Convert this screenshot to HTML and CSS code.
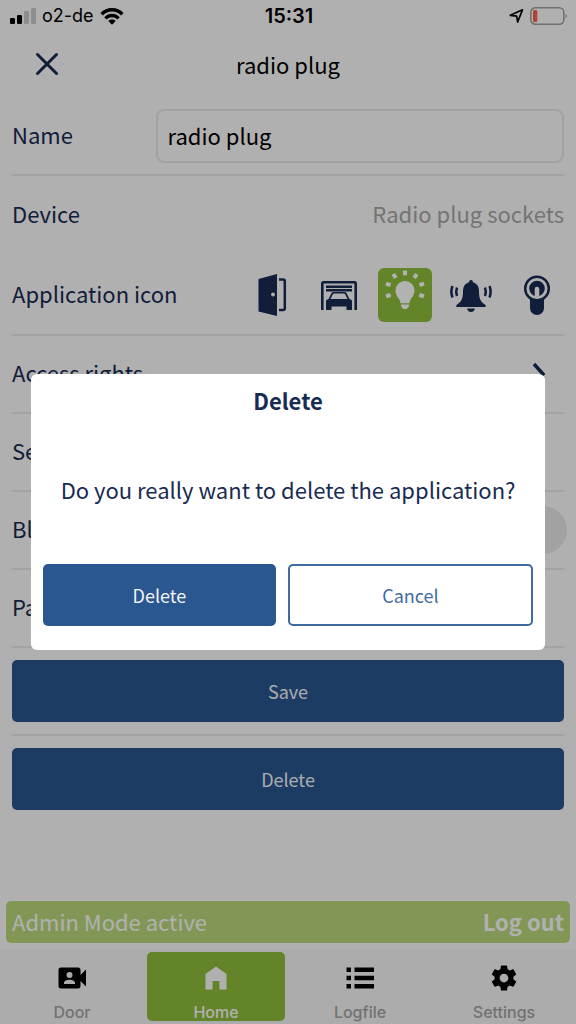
FILE: index.html
```html
<!DOCTYPE html>
<html lang="en">
<head>
<meta charset="utf-8">
<meta name="viewport" content="width=device-width, initial-scale=1">
<title>radio plug</title>
<link rel="stylesheet" href="styles.css">
</head>
<body>
<div class="screen">
  <div class="status">
    <div class="carrier">
      <svg width="26" height="16" viewBox="0 0 26 16" aria-hidden="true">
        <rect x="0" y="10" width="5" height="6" rx="1.3"/>
        <rect x="7" y="7" width="5" height="9" rx="1.3"/>
        <g fill="#ccc"><rect x="14" y="3" width="5" height="13" rx="1.3"/><rect x="21" y="0" width="5" height="16" rx="1.3"/></g>
      </svg>
      <span>o2-de</span>
      <svg width="24" height="17" viewBox="0 0 24 17" aria-hidden="true">
        <g fill="none" stroke="#000" stroke-width="3.400"><path d="M1.6 6.2C7.4.2 16.600.2 22.400 6.200"/><path d="M5.400 10.400C9.200 6.600 14.800 6.600 18.600 10.400"/></g>
        <path d="M8.300 12.900C10.400 11 13.600 11 15.700 12.900L12 16.800Z"/>
      </svg>
    </div>
    <time class="clock">15:31</time>
    <div class="power">
      <svg width="15" height="16" viewBox="0 0 15 16" aria-hidden="true"><path d="M1.300 7.300 13.500 1.800 8.700 14 7.700 8.100Z" fill="none" stroke="#000" stroke-width="1.700" stroke-linejoin="round"/></svg>
      <svg width="38" height="18" viewBox="0 0 38 18" aria-hidden="true"><rect x=".8" y=".8" width="33" height="16.400" rx="4.500" fill="none" stroke="#9f9f9f" stroke-width="1.500"/><rect x="3" y="3" width="4.300" height="12" rx="1.500" fill="#ff5d48"/><path d="M35.500 6.500Q38 9 35.500 11.800Z" fill="#9f9f9f"/></svg>
    </div>
  </div>
  <header class="header">
    <button class="close" type="button" aria-label="Close"><svg width="24" height="24" viewBox="0 0 24 24"><path d="M2.500 2.500 21.500 21.500M21.500 2.500 2.500 21.500" fill="none" stroke="#182b53" stroke-width="3" stroke-linecap="round"/></svg></button>
    <h1 class="title">radio plug</h1>
  </header>
  <main class="form">
    <div class="row"><label class="label" for="name">Name</label><input class="field" id="name" type="text" value="radio plug"></div>
    <div class="row row-tall row-open"><span class="label">Device</span><span class="value">Radio plug sockets</span></div>
    <div class="row row-tall">
      <span class="label">Application icon</span>
      <div class="icons">
        <button class="icon" type="button" aria-label="Door"><svg width="54" height="54" viewBox="0 0 54 54"><path d="M12.500 11 31 6V48L12.500 43.500Z"/><circle cx="27" cy="26.500" r="1.900" fill="#fdfdfd"/><path d="M33 11.500H37Q38.800 11.500 38.800 13V40.500Q38.800 42 37 42H33" fill="none" stroke="#182b53" stroke-width="2.500"/></svg></button>
        <button class="icon" type="button" aria-label="Garage"><svg width="54" height="54" viewBox="0 0 54 54"><path d="M10.300 42V15.500Q10.300 14.300 11.500 14.300H42.500Q43.700 14.300 43.700 15.500V42" fill="none" stroke="#182b53" stroke-width="2.600"/><path d="M14 17.500H40V20H14ZM14 20.900H40V23.500H14Z"/><path fill-rule="evenodd" d="M14 33Q14 31.500 16.500 31L19.500 25Q20 24 22 24H32Q34 24 34.500 25L37.500 31Q40 31.500 40 33V42H34.500V38.500H19.500V42H14ZM18.500 31H35.500L33 26Q32.700 25.500 31.500 25.500H22.500Q21.300 25.500 21 26Z"/></svg></button>
        <button class="icon icon-on" type="button" aria-label="Light" aria-pressed="true"><svg width="54" height="54" viewBox="0 0 54 54"><path d="M22.500 35.300C22.500 30.500 17.500 29 17.500 22.500A9.500 9.500 0 0 1 36.500 22.500C36.500 29 31.500 30.500 31.500 35.300ZM23 36.500H31V38.500L28.500 41H25.500L23 38.500Z"/><g fill="none" stroke="#fff" stroke-width="4"><path d="M27 2.500V7.200M15.300 6 17.800 10M38.700 6 36.200 10M8 15.500 12.500 17.200M46 15.500 41.500 17.200M8 28.300 12.700 27M46 28.300 41.300 27"/></g></svg></button>
        <button class="icon" type="button" aria-label="Bell"><svg width="54" height="54" viewBox="0 0 54 54"><path d="M25 14.200Q25 12 27 12T29 14.200Q35 16 35 23C35 31 36.500 33.500 41.500 37Q42.500 39 40.500 39H13.500Q11.500 39 12.500 37C17.500 33.500 19 31 19 23Q19 16 25 14.200ZM23 40.500H31Q30 44 27 44T23 40.500Z"/><path d="M13 19.500Q11.500 23.500 13 28M8.500 18Q6.300 23.500 8.500 29.500M41 19.500Q42.500 23.500 41 28M45.500 18Q47.700 23.500 45.500 29.500" fill="none" stroke="#182b53" stroke-width="2.500"/></svg></button>
        <button class="icon" type="button" aria-label="Switch"><svg width="54" height="54" viewBox="0 0 54 54"><path d="M20 31H34V40A7 7 0 0 1 20 40Z"/><circle cx="27" cy="20.500" r="11.800" fill="#fdfdfd" stroke="#182b53" stroke-width="2.500"/><circle cx="27" cy="20.500" r="7.800"/><path d="M24.700 28.500V21A2.300 2.300 0 0 1 29.300 21V28.500Z" fill="#fdfdfd"/></svg></button>
      </div>
    </div>
    <div class="row"><a class="link" href="#rights"><span class="label">Access rights</span><svg width="15" height="24" viewBox="0 0 15 24" aria-hidden="true"><path d="M2 2 11 12 2 22" fill="none" stroke="#182b53" stroke-width="3.500"/></svg></a></div>
    <div class="row"><span class="label">Se</span></div>
    <div class="row"><label class="label" for="toggle">Bl</label><input class="toggle" id="toggle" type="checkbox" role="switch" checked></div>
    <div class="row"><span class="label">Pa</span></div>
    <div class="action action-line"><button class="button" type="button">Save</button></div>
    <div class="action"><button class="button" type="button">Delete</button></div>
  </main>
  <div class="admin"><span>Admin Mode active</span><button class="logout" type="button">Log out</button></div>
  <nav class="tabs">
    <a class="tab" href="#door"><svg width="30" height="30" viewBox="0 0 30 30" aria-hidden="true"><path fill-rule="evenodd" d="M4 4.500H21Q23.500 4.500 23.500 7V12L29 6.500V23.500L23.500 18V23Q23.500 25.500 21 25.500H4Q1.500 25.500 1.500 23V7Q1.500 4.500 4 4.500ZM12.500 9A3 3 0 1 0 12.500 15A3 3 0 1 0 12.500 9ZM7 21H18V19.800C18 17.800 15 16.700 12.500 16.700S7 17.800 7 19.800Z"/></svg>Door</a>
    <a class="tab tab-on" href="#home" aria-current="page"><svg width="30" height="30" viewBox="0 0 30 30" aria-hidden="true"><path d="M4.500 11 15 3.500 25.500 11V26.500H18.500V18H11.500V26.500H4.500Z"/></svg>Home</a>
    <a class="tab" href="#log"><svg width="30" height="30" viewBox="0 0 30 30" aria-hidden="true"><path d="M1.500 4.500H6V9H1.500ZM9.500 4.500H29V9H9.500ZM1.500 12.700H6V17.200H1.500ZM9.500 12.700H29V17.200H9.500ZM1.500 21H6V25.500H1.500ZM9.500 21H29V25.500H9.500Z"/></svg>Logfile</a>
    <a class="tab" href="#settings"><svg width="30" height="30" viewBox="0 0 24 24" aria-hidden="true"><path d="M19.430 12.980c.04-.32.070-.64.070-.98s-.03-.66-.07-.98l2.110-1.650c.19-.15.240-.42.120-.64l-2-3.460c-.12-.22-.39-.3-.61-.22l-2.490 1c-.52-.4-1.080-.73-1.690-.98l-.38-2.650C14.460 2.180 14.250 2 14 2h-4c-.25 0-.46.180-.49.420l-.38 2.650c-.61.250-1.170.590-1.690.980l-2.490-1c-.23-.09-.49 0-.61.220l-2 3.460c-.13.220-.07.490.12.640l2.110 1.650c-.04.320-.07.650-.07.980s.03.660.07.980l-2.110 1.650c-.19.150-.24.420-.12.640l2 3.460c.12.220.39.300.61.220l2.490-1c.52.400 1.080.730 1.690.980l.38 2.650c.03.240.24.420.49.420h4c.25 0 .46-.18.490-.42l.38-2.650c.61-.25 1.170-.59 1.690-.98l2.490 1c.23.090.49 0 .61-.22l2-3.460c.12-.22.070-.49-.12-.64l-2.110-1.650zM12 15.500c-1.930 0-3.500-1.570-3.500-3.500s1.570-3.500 3.500-3.500 3.500 1.570 3.500 3.500-1.570 3.500-3.500 3.500z"/></svg>Settings</a>
  </nav>
</div>
<div class="backdrop">
  <section class="dialog" role="dialog" aria-modal="true" aria-labelledby="dialog-title">
    <h2 class="dialog-title" id="dialog-title">Delete</h2>
    <p class="dialog-text">Do you really want to delete the application?</p>
    <div class="dialog-actions">
      <button class="button" type="button">Delete</button>
      <button class="button button-outline" type="button">Cancel</button>
    </div>
  </section>
</div>
</body>
</html>
```

FILE: styles.css
```css
* { box-sizing: border-box; }
body {
  margin: 0;
  background: #fdfdfd;
  color: #182b53;
  font: 22px/32px "Noto Sans CJK SC", "Noto Sans", sans-serif;
}
button, input { font: inherit; color: inherit; }
button { padding: 0; border: 0; background: none; }
a { color: inherit; text-decoration: none; }
svg { display: block; flex: none; }

.screen { display: flex; flex-direction: column; min-height: 100vh; }

.status {
  display: grid;
  grid-template-columns: 1fr auto 1fr;
  align-items: center;
  height: 32px;
  padding: 0 8px 0 10px;
  color: #000;
  font: 18px/24px Inter, sans-serif;
}
.carrier, .power { display: flex; align-items: center; gap: 6px; }
.power { justify-content: flex-end; }
.clock { font-size: 20px; font-weight: 600; }

.header {
  display: grid;
  grid-template-columns: 71px 1fr 71px;
  align-items: center;
  height: 64px;
  margin-bottom: 2px;
}
.close { justify-self: end; width: 48px; height: 48px; display: grid; place-items: center; }
.title { margin: 0; color: #000; font-size: 22px; font-weight: 400; text-align: center; }

.form { flex: 1; padding: 0 12px; }
.row {
  display: flex;
  align-items: center;
  justify-content: space-between;
  height: 78px;
  border-bottom: 2px solid #e8e8e8;
}
.row-tall { height: 80px; }
.row-open { border-bottom-color: transparent; }
.label, .value { padding-bottom: 4px; }
.field {
  width: 74%;
  height: 54px;
  padding: 0 10px 2px;
  border: 2px solid #e8e8e8;
  border-radius: 8px;
  background: #fdfdfd;
  color: #000;
}
.value { color: #a6a6a6; }
.icons { display: flex; gap: 12px; }
.icon { width: 54px; height: 54px; border-radius: 6px; fill: #182b53; }
.icon-on { background: #90be3c; fill: #fff; }
.link { display: flex; flex: 1; align-items: center; justify-content: space-between; padding-right: 17px; }
.toggle {
  appearance: none;
  width: 80px;
  height: 36px;
  margin: 0 -3px 0 0;
  border-radius: 24px;
  background: #f4f4f4;
  display: flex;
  align-items: center;
  justify-content: flex-end;
}
.toggle::before { content: ""; width: 48px; height: 48px; border-radius: 50%; background: #e8e8e8; }

.action { padding: 12px 0; }
.action-line { border-bottom: 2px solid #e8e8e8; }
.button {
  display: block;
  width: 100%;
  height: 62px;
  border-radius: 5px;
  background: #2a578f;
  color: #f3f6fa;
  font-size: 18px;
}
.button-outline { border: 2px solid #3f6ba3; background: #fff; color: #3f6ba3; }

.admin {
  display: flex;
  align-items: center;
  justify-content: space-between;
  height: 42px;
  margin: 0 6px 6px;
  padding: 0 6px 3px;
  border-radius: 5px;
  background: #bbd97b;
  color: #fdfdfd;
}
.logout { font-weight: 700; }

.tabs { display: grid; grid-template-columns: repeat(4, 1fr); height: 75px; padding: 3px 0; background: #f6f6f6; }
.tab {
  display: flex;
  flex-direction: column;
  align-items: center;
  gap: 10px;
  margin: 0 3px;
  padding-top: 11px;
  border-radius: 5px;
  color: #a4a4a4;
  font: 500 16px/18px Inter, sans-serif;
}
.tab svg { fill: #000; }
.tab-on { background: #90be3c; color: #fdfdfd; }
.tab-on svg { fill: #fdfdfd; }

.backdrop {
  position: fixed;
  inset: 0;
  display: flex;
  align-items: center;
  padding: 0 31px;
  background: rgba(0, 0, 0, .3);
}
.dialog { flex: 1; padding: 10px 12px 24px; border-radius: 6px; background: #fff; }
.dialog-title { margin: 0; font-size: 22px; font-weight: 700; text-align: center; }
.dialog-text { margin: 57px 0 59px; text-align: center; }
.dialog-actions { display: grid; grid-template-columns: 19fr 20fr; gap: 12px; }
```
